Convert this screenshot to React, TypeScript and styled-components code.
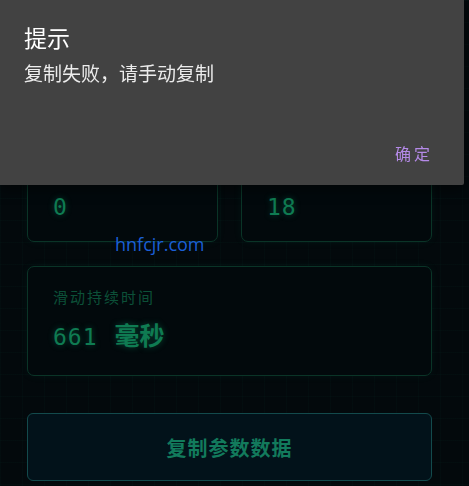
import React from 'react'
import styled, { createGlobalStyle } from 'styled-components'

interface Metric {
	label: string
	value: string
	unit?: string
}

interface ValueProps {
	$spacing: number
}

const topMetrics: Metric[] = [
	{ label: '滑动起点', value: '0' },
	{ label: '滑动步数', value: '18' },
]

const duration: Metric = { label: '滑动持续时间', value: '661', unit: '毫秒' }

const GlobalStyle = createGlobalStyle`
	html, body {
		margin: 0;
		padding: 0;
		background: #03090c;
	}
	body {
		font-family: 'Noto Sans CJK SC', 'Noto Sans', sans-serif;
		overflow: hidden;
	}
`

const MetricCard = ({ label, value, unit }: Metric) => (
	<Card>
		<Label>{label}</Label>
		{/* unit-less values sit a little lower */}
		<Value $spacing={unit ? 12 : 19}>
			<span className="num">{value}</span>
			{unit && <span className="unit">{unit}</span>}
		</Value>
	</Card>
)

const App = () => {
	return (
		<>
			<GlobalStyle />
			<Page>
				<Row>
					{topMetrics.map((m) => (
						<MetricCard key={m.label} {...m} />
					))}
				</Row>
				<MetricCard {...duration} />
				<CopyButton>复制参数数据</CopyButton>
				<Watermark>hnfcjr.com</Watermark>
			</Page>
			<Dialog>
				<DialogTitle>提示</DialogTitle>
				<DialogMessage>复制失败，请手动复制</DialogMessage>
				<DialogActions>
					<DialogButton>确定</DialogButton>
				</DialogActions>
			</Dialog>
		</>
	)
}

const Page = styled.div`
	position: relative;
	width: 469px;
	height: 486px;
	box-sizing: border-box;
	padding: 132px 37px 0 27px;
	display: flex;
	flex-direction: column;
	gap: 24px;
	background-color: #03090c;
	background-image: linear-gradient(
			90deg,
			rgba(16, 185, 129, 0.025) 1px,
			transparent 1px
		),
		linear-gradient(rgba(16, 185, 129, 0.025) 1px, transparent 1px);
	background-size: 22px 22px;
`

const Row = styled.div`
	display: grid;
	grid-template-columns: 1fr 1fr;
	gap: 23px;
`

const Card = styled.div`
	height: 110px;
	box-sizing: border-box;
	padding: 20px 25px 0;
	border: 1px solid #0a3427;
	border-radius: 7px;
	background: #02090c;
	box-shadow: 0 0 10px rgba(16, 185, 129, 0.06);
	display: flex;
	flex-direction: column;
`

const Label = styled.div`
	font-size: 15px;
	letter-spacing: 2px;
	line-height: 20px;
	color: #0c5038;
`

const Value = styled.div<ValueProps>`
	margin-top: ${(props) => props.$spacing}px;
	height: 30px;
	line-height: 30px;
	display: flex;
	align-items: baseline;
	gap: 17px;
	color: #0f7b52;
	text-shadow: 0 0 6px rgba(16, 185, 129, 0.35);

	.num {
		font-family: 'DejaVu Sans Mono', monospace;
		font-size: 23px;
		letter-spacing: 1px;
	}

	.unit {
		font-size: 25px;
		font-weight: 700;
	}
`

const CopyButton = styled.button`
	margin-top: 13px;
	height: 68px;
	border: 1px solid #134a4c;
	border-radius: 6px;
	background: #02121a;
	color: #127a5c;
	font-family: 'Noto Sans CJK SC', sans-serif;
	font-size: 20px;
	font-weight: 700;
	letter-spacing: 1px;
	cursor: pointer;
`

const Watermark = styled.div`
	position: absolute;
	left: 115px;
	top: 232px;
	font-family: 'Open Sans', 'Noto Sans', sans-serif;
	font-size: 18px;
	color: #1b5fd6;
`

const Dialog = styled.div`
	position: fixed;
	top: 0;
	left: 0;
	width: 464px;
	height: 185px;
	box-sizing: border-box;
	padding: 21px 24px 0;
	background: #424242;
	border-radius: 0 0 2px 0;
	box-shadow: 0 4px 14px rgba(0, 0, 0, 0.5);
	display: flex;
	flex-direction: column;
`

const DialogTitle = styled.div`
	font-size: 23px;
	line-height: 32px;
	color: #ffffff;
`

const DialogMessage = styled.div`
	margin-top: 7px;
	font-size: 19px;
	line-height: 26px;
	color: #ececec;
`

const DialogActions = styled.div`
	margin-top: auto;
	margin-bottom: 20px;
	display: flex;
	justify-content: flex-end;
`

const DialogButton = styled.button`
	padding: 0 7px 0 0;
	border: none;
	background: transparent;
	font-family: 'Noto Sans CJK SC', sans-serif;
	font-size: 16px;
	letter-spacing: 3px;
	line-height: 24px;
	color: #b58ae8;
	cursor: pointer;
`

export default App
